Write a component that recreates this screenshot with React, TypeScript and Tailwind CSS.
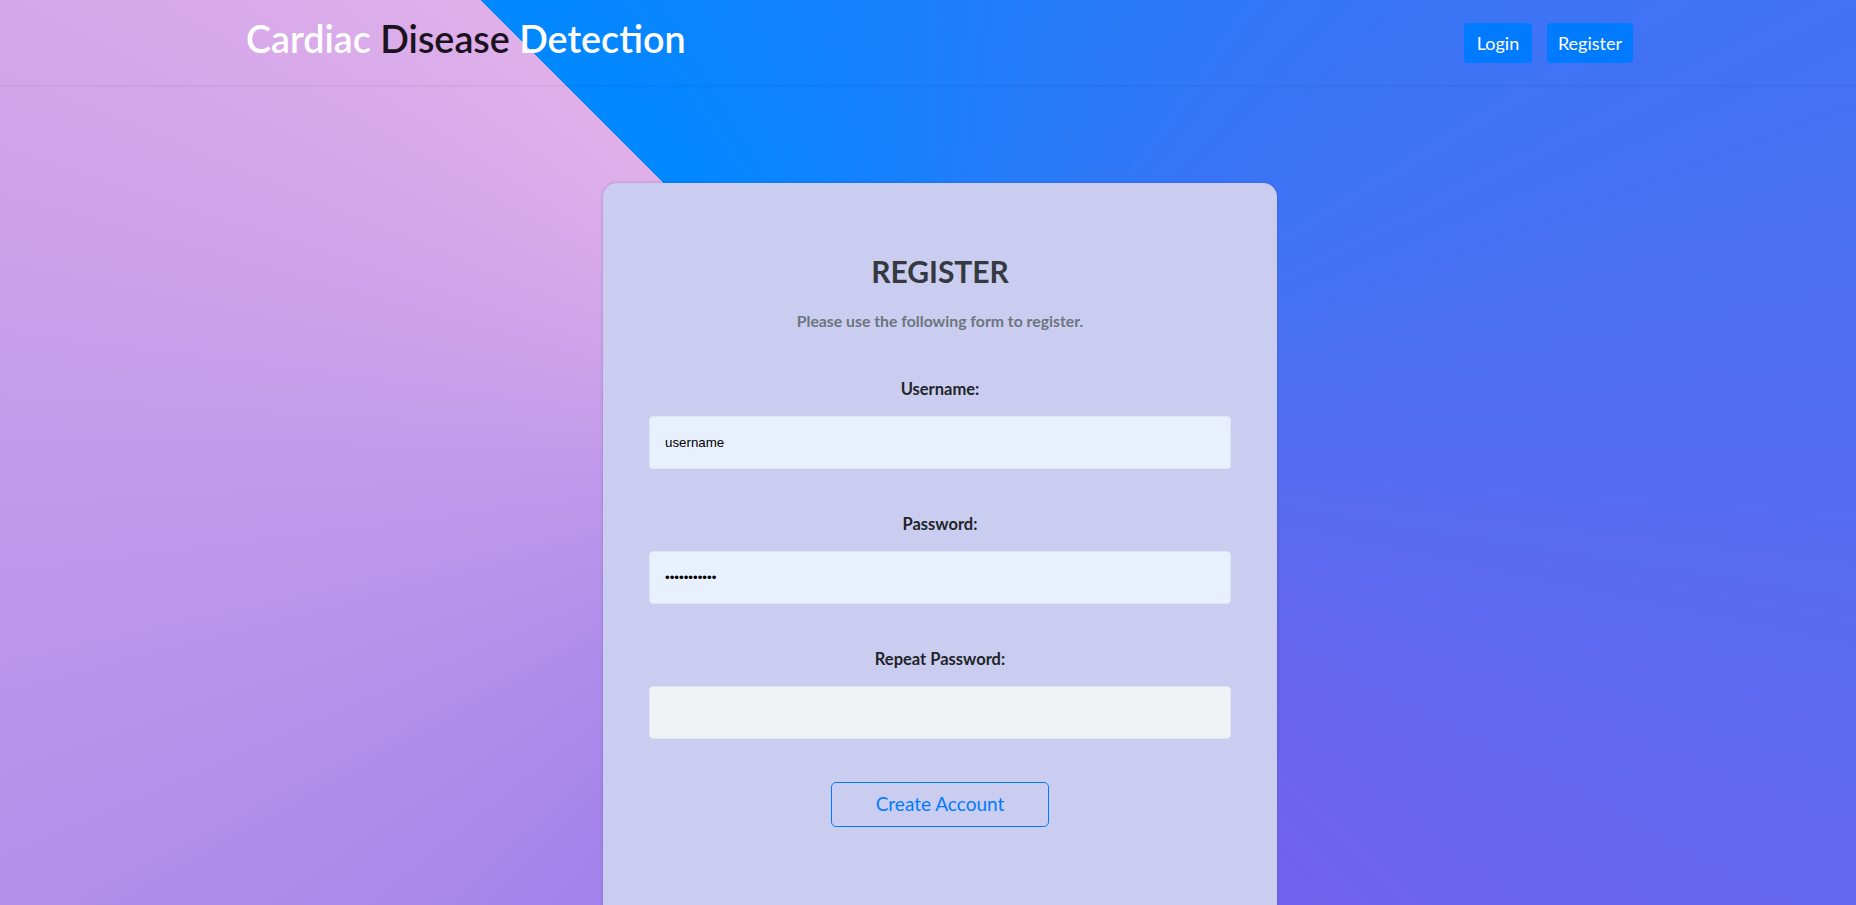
import React from "react";

const font = "font-['Lato','Noto_Sans',sans-serif]";

function Header() {
  return (
    <header className="h-[85px] flex items-center justify-between pl-[246px] pr-[223px] shadow-[0_1px_2px_rgba(0,0,0,0.08)]">
      <h1 className="mb-[7px] text-[37.7px] leading-none font-semibold text-white">
        Cardiac <span className="text-[#1a1320]">Disease</span> Detection
      </h1>
      <nav className="flex items-center gap-[15px] mt-[1px]">
        <a href="#" className="h-[40px] w-[68px] flex items-center justify-center rounded-[4px] bg-[#007bff] text-white text-[18px]">
          Login
        </a>
        <a href="#" className="h-[40px] w-[86px] flex items-center justify-center rounded-[4px] bg-[#007bff] text-white text-[18px]">
          Register
        </a>
      </nav>
    </header>
  );
}

function Field({ label, type, value, bg }: { label: string; type: string; value: string; bg: string }) {
  return (
    <div className="flex flex-col items-center">
      <label className="text-[16.5px] leading-[24px] font-bold text-[#212529]">{label}</label>
      <input
        type={type}
        defaultValue={value}
        className={`mt-[15px] w-full h-[53px] px-[15px] rounded-[4px] border border-[#dfe4f6] text-[13.33px] text-black font-['Liberation_Sans',Arial,sans-serif] outline-none ${bg}`}
      />
    </div>
  );
}

export default function App() {
  return (
    <div className={`h-screen overflow-hidden bg-[image:conic-gradient(from_-45deg_at_932px_452px,#0088ff_0deg,#7561ec_190deg,#e0b0ea_360deg)] ${font}`}>
      <Header />
      <main className="flex justify-center pl-[24px] mt-[98px]">
        <div className="w-[674px] rounded-[14px] bg-[#cbcdf0] shadow-[0_0_3px_rgba(60,60,120,0.35)] px-[46px] pt-[70px] pb-[100px] text-center">
          <h2 className="text-[30px] leading-[36px] font-bold text-[#343a40]">REGISTER</h2>
          <p className="mt-[22px] text-[15.8px] leading-[20px] font-bold text-[#6c757d]">
            Please use the following form to register.
          </p>
          <form className="mt-[46px] flex flex-col gap-[43px]">
            <Field label="Username:" type="text" value="username" bg="bg-[#e8f0fe]" />
            <Field label="Password:" type="password" value="passwordabc" bg="bg-[#e8f0fe]" />
            <Field label="Repeat Password:" type="password" value="" bg="bg-[#eff3f5]" />
            <div className="flex justify-center">
              <button
                type="button"
                className="w-[218px] h-[45px] rounded-[5px] border border-[#007bff] text-[#007bff] text-[19px]"
              >
                Create Account
              </button>
            </div>
          </form>
        </div>
      </main>
    </div>
  );
}
